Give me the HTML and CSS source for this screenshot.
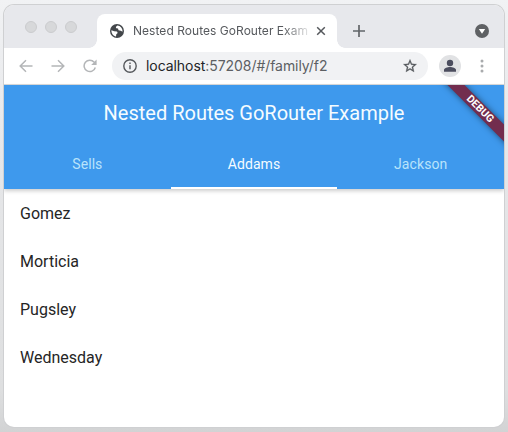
FILE: index.html
```html
<!DOCTYPE html>
<html lang="en">
<head>
<meta charset="utf-8">
<title>Nested Routes GoRouter Example</title>
<link rel="stylesheet" href="styles.css">
</head>
<body>
<div class="window">
  <div class="tabstrip">
    <div class="lights"><i></i><i></i><i></i></div>
    <div class="tab">
      <svg class="globe" width="14" height="14" viewBox="0 0 14 14"><circle cx="7" cy="7" r="7" fill="#43474b"/><path d="M1.4 6.3 4.2 7.2 7 7.5 7.7 9 6.3 10.2 6 12.5C3.400 12.300 1.300 9.500 1.400 6.300ZM7.300 1.500C6 2.400 5.500 3.500 6.300 4.300L8 4.500 8.500 6.300 10.800 6.800 12.500 7.800C12.900 4.600 10.400 1.700 7.300 1.500Z" fill="#fff"/></svg>
      <span class="tab-title">Nested Routes GoRouter Example</span>
      <svg class="close" width="10" height="10" viewBox="0 0 10 10"><path d="M1.200 1.200 8.800 8.800M8.800 1.200 1.200 8.800" stroke="#55585c" stroke-width="1.500"/></svg>
    </div>
    <svg class="plus" width="12" height="12" viewBox="0 0 12 12"><path d="M6 0V12M0 6H12" stroke="#626569" stroke-width="1.700"/></svg>
    <svg class="search" width="14" height="14" viewBox="0 0 14 14"><circle cx="7" cy="7" r="7" fill="#5f6164"/><path d="M3.800 5H10.200L7 9.800Z" fill="#fff"/></svg>
  </div>
  <div class="toolbar">
    <svg class="nav" width="14" height="14" viewBox="0 0 14 14"><path d="M13.500 7H1.500M7 1.200 1.200 7 7 12.800" fill="none" stroke="#b4b6b8" stroke-width="1.500"/></svg>
    <svg class="nav" width="14" height="14" viewBox="0 0 14 14"><path d="M.5 7H12.500M7 1.200 12.800 7 7 12.800" fill="none" stroke="#b4b6b8" stroke-width="1.500"/></svg>
    <svg class="nav" width="14" height="14" viewBox="0 0 14 14"><path d="M12.300 8.500A5.700 5.700 0 1 1 11.200 3.200" fill="none" stroke="#b4b6b8" stroke-width="1.500"/><path d="M13.600.6V6H8.200Z" fill="#b4b6b8"/></svg>
    <div class="address">
      <svg width="14" height="14" viewBox="0 0 14 14"><circle cx="7" cy="7" r="6.200" fill="none" stroke="#55585c" stroke-width="1.400"/><path d="M7 6.200V10.300M7 3.600V5" stroke="#55585c" stroke-width="1.400"/></svg>
      <span class="url"><b>localhost</b>:57208/#/family/f2</span>
      <svg class="star" width="16" height="16" viewBox="0 0 24 24"><path d="M22 9.240 14.810 8.620 12 2 9.190 8.630 2 9.240 7.460 13.970 5.820 21 12 17.270 18.180 21 16.550 13.970ZM12 15.400 8.240 17.670 9.240 13.390 5.920 10.510 10.300 10.130 12 6.100 13.710 10.140 18.090 10.520 14.770 13.400 15.770 17.680Z" fill="#55585c" stroke="#55585c" stroke-width=".4"/></svg>
    </div>
    <svg class="avatar" width="22" height="22" viewBox="0 0 22 22"><circle cx="11" cy="11" r="11" fill="#e1e2e4"/><circle cx="11" cy="8" r="3.200" fill="#4b4d5e"/><path d="M5 16.800V15C5 12.900 8.500 12 11 12S17 12.900 17 15V16.800Z" fill="#4b4d5e"/></svg>
    <svg class="more" width="4" height="14" viewBox="0 0 4 14"><g fill="#a9abad"><circle cx="2" cy="2" r="1.500"/><circle cx="2" cy="7" r="1.500"/><circle cx="2" cy="12" r="1.500"/></g></svg>
  </div>
  <header class="appbar">
    <h1>Nested Routes GoRouter Example</h1>
    <nav class="tabs"><span>Sells</span><span class="active">Addams</span><span>Jackson</span></nav>
    <div class="debug"><div class="ribbon">DEBUG</div></div>
  </header>
  <ul class="people"><li>Gomez</li><li>Morticia</li><li>Pugsley</li><li>Wednesday</li></ul>
</div>
</body>
</html>
```
FILE: styles.css
```css
* { box-sizing: border-box; }
body {
  margin: 0;
  height: 432px;
  padding: 5px 4px;
  overflow: hidden;
  background: linear-gradient(#f1f2f4, #e6e7e9 35%, #dedfe0 90%, #d2d3d4);
  font-family: Roboto, sans-serif;
}
svg { display: block; flex: none; }
.window {
  height: 422px;
  display: flex;
  flex-direction: column;
  overflow: hidden;
  border-radius: 10px;
  background: #fff;
  box-shadow: 0 0 0 1px #cfd0d2;
}
.tabstrip {
  flex: none;
  height: 43px;
  display: flex;
  align-items: center;
  padding: 9px 15px 0 21px;
  background: #e7e8ec;
}
.lights { display: flex; gap: 8px; width: 72px; margin-top: -8px; }
.lights i {
  width: 12px;
  height: 12px;
  border-radius: 50%;
  background: #d7d8da;
  border: 1px solid #cbccce;
}
.tab {
  position: relative;
  width: 240px;
  height: 34px;
  display: flex;
  align-items: center;
  padding: 0 11px 0 13px;
  border-radius: 8px 8px 0 0;
  background: #fff;
}
.tab::before, .tab::after {
  content: "";
  position: absolute;
  bottom: 0;
  width: 8px;
  height: 8px;
}
.tab::before { left: -8px; background: radial-gradient(circle at 0 0, #e7e8ec 7.5px, #fff 8px); }
.tab::after { right: -8px; background: radial-gradient(circle at 100% 0, #e7e8ec 7.5px, #fff 8px); }
.tab-title {
  flex: 1;
  margin: 0 8px 0 9px;
  overflow: hidden;
  white-space: nowrap;
  font: 12px/16px Inter, sans-serif;
  letter-spacing: .04px;
  color: #56595d;
  -webkit-mask-image: linear-gradient(90deg, #000 150px, transparent 180px);
  mask-image: linear-gradient(90deg, #000 150px, transparent 180px);
}
.plus { margin-left: 16px; }
.search { margin-left: auto; }
.toolbar {
  flex: none;
  height: 37px;
  display: flex;
  align-items: center;
  padding: 0 20px 0 15px;
  border-bottom: 1px solid #d9dadb;
}
.nav { margin-right: 18px; }
.address {
  width: 316px;
  height: 28px;
  margin-left: -3px;
  display: flex;
  align-items: center;
  padding: 0 10px 0 11px;
  border-radius: 14px;
  background: #f1f2f4;
}
.url { margin-left: 9px; font: 14px/20px Inter, sans-serif; letter-spacing: -.06px; color: #5c5f63; }
.url b { font-weight: 400; color: #222427; }
.star { margin-left: auto; }
.avatar { margin-left: 11px; }
.more { margin-left: auto; }
.appbar {
  position: relative;
  flex: none;
  height: 104px;
  background: #3e99ed;
  color: #f5fcff;
  box-shadow: 0 2px 4px rgba(0, 0, 0, .2);
}
h1 {
  margin: 0;
  height: 56px;
  font-size: 20px;
  font-weight: 400;
  line-height: 57px;
  text-align: center;
}
.tabs { display: flex; height: 48px; }
.tabs span {
  flex: 1;
  font-size: 14px;
  font-weight: 400;
  letter-spacing: .08px;
  line-height: 47px;
  text-align: center;
  color: #b9e3fb;
}
.tabs .active { color: #f5fcff; border-bottom: 2px solid #fff; }
.debug {
  position: absolute;
  top: 0;
  right: 0;
  width: 70px;
  height: 70px;
  overflow: hidden;
}
.ribbon {
  position: absolute;
  left: -4px;
  top: 18px;
  width: 100px;
  height: 12px;
  transform: rotate(45deg);
  background: #722d4e;
  box-shadow: 0 0 6px rgba(0, 0, 0, .5);
  font-size: 10.5px;
  font-weight: 700;
  line-height: 12px;
  text-align: center;
  color: #fff;
}
.people { list-style: none; margin: 0; padding: 1px 16px 0; }
.people li {
  height: 48px;
  font-size: 16px;
  line-height: 48px;
  color: #252525;
}
```
